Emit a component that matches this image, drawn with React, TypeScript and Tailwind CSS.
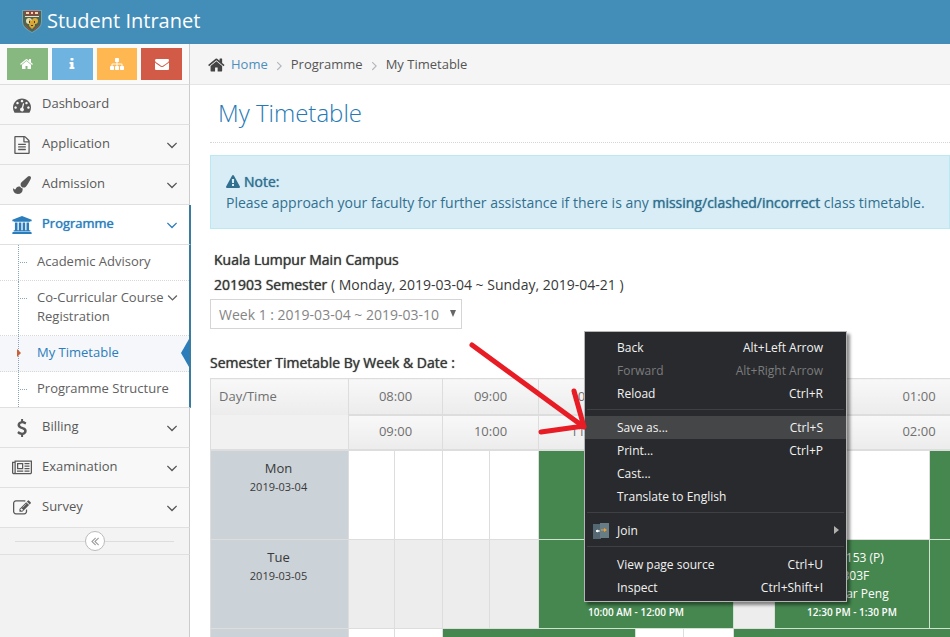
import React from 'react';

const PATHS = {
  home: 'M1408 992v480q0 26-19 45t-45 19h-384v-384h-256v384h-384q-26 0-45-19t-19-45v-480q0-1 .5-3t.5-3l575-474 575 474q1 2 1 6zm223-69l-62 74q-8 9-21 11h-3q-13 0-21-7l-692-577-692 577q-12 8-24 7-13-2-21-11l-62-74q-8-10-7-23.5t11-21.5l719-599q32-26 76-26t76 26l244 204v-195q0-14 9-23t23-9h192q14 0 23 9t9 23v408l219 182q10 8 11 21.5t-7 23.5z',
  info: 'M1216 1344v128q0 26-19 45t-45 19h-512q-26 0-45-19t-19-45v-128q0-26 19-45t45-19h64v-384h-64q-26 0-45-19t-19-45v-128q0-26 19-45t45-19h384q26 0 45 19t19 45v576h64q26 0 45 19t19 45zm-128-1152v192q0 26-19 45t-45 19h-256q-26 0-45-19t-19-45v-192q0-26 19-45t45-19h256q26 0 45 19t19 45z',
  sitemap: 'M1792 1248v320q0 40-28 68t-68 28h-320q-40 0-68-28t-28-68v-320q0-40 28-68t68-28h96v-192h-512v192h96q40 0 68 28t28 68v320q0 40-28 68t-68 28h-320q-40 0-68-28t-28-68v-320q0-40 28-68t68-28h96v-192h-512v192h96q40 0 68 28t28 68v320q0 40-28 68t-68 28h-320q-40 0-68-28t-28-68v-320q0-40 28-68t68-28h96v-192q0-52 38-90t90-38h512v-192h-96q-40 0-68-28t-28-68v-320q0-40 28-68t68-28h320q40 0 68 28t28 68v320q0 40-28 68t-68 28h-96v192h512q52 0 90 38t38 90v192h96q40 0 68 28t28 68z',
  envelope: 'M1792 710v794q0 66-47 113t-113 47h-1472q-66 0-113-47t-47-113v-794q44 49 101 87 362 246 497 345 57 42 92.5 65.5t94.5 48 110 24.5h2q51 0 110-24.5t94.5-48 92.5-65.5q170-123 498-345 57-39 100-87zm0-294q0 79-49 151t-122 123q-376 261-468 325-10 7-42.5 31t-54 38.5-52 32.5-57.5 27-50 9h-2q-23 0-50-9t-57.5-27-52-32.5-54-38.5-42.5-31q-91-64-262-182.5t-205-142.5q-62-42-117-115.5t-55-136.5q0-78 41.5-130t118.5-52h1472q65 0 112.5 47t47.5 113z',
  gauge: 'M384 1152q0-53-37.5-90.5t-90.5-37.5-90.5 37.5-37.5 90.5 37.5 90.5 90.5 37.5 90.5-37.5 37.5-90.5zm192-448q0-53-37.5-90.5t-90.5-37.5-90.5 37.5-37.5 90.5 37.5 90.5 90.5 37.5 90.5-37.5 37.5-90.5zm428 481l101-382q6-26-7.5-48.5t-38.5-29.5-48 6.5-30 39.5l-101 382q-60 5-107 43.5t-63 98.5q-20 77 20 146t117 89 146-20 89-117q16-60-6-117t-72-91zm660-33q0-53-37.5-90.5t-90.5-37.5-90.5 37.5-37.5 90.5 37.5 90.5 90.5 37.5 90.5-37.5 37.5-90.5zm-640-640q0-53-37.5-90.5t-90.5-37.5-90.5 37.5-37.5 90.5 37.5 90.5 90.5 37.5 90.5-37.5 37.5-90.5zm448 192q0-53-37.5-90.5t-90.5-37.5-90.5 37.5-37.5 90.5 37.5 90.5 90.5 37.5 90.5-37.5 37.5-90.5zm320 448q0 261-141 483-19 29-54 29h-1402q-35 0-54-29-141-221-141-483 0-182 71-348t191-286 286-191 348-71 348 71 286 191 191 286 71 348z',
  file: 'M1596 380q28 28 48 76t20 88v1152q0 40-28 68t-68 28h-1344q-40 0-68-28t-28-68v-1600q0-40 28-68t68-28h896q40 0 88 20t76 48zm-444-244v376h376q-10-29-22-41l-313-313q-12-12-41-22zm384 1528v-1024h-416q-40 0-68-28t-28-68v-416h-768v1536h1280zm-1024-864q0-14 9-23t23-9h704q14 0 23 9t9 23v64q0 14-9 23t-23 9h-704q-14 0-23-9t-9-23v-64zm736 224q14 0 23 9t9 23v64q0 14-9 23t-23 9h-704q-14 0-23-9t-9-23v-64q0-14 9-23t23-9h704zm0 256q14 0 23 9t9 23v64q0 14-9 23t-23 9h-704q-14 0-23-9t-9-23v-64q0-14 9-23t23-9h704z',
  brush: 'M1615 0q70 0 122.5 46.5t52.5 116.5q0 63-45 151-332 629-465 752-97 91-218 91-126 0-216.5-92.5t-90.5-219.5q0-128 92-212l638-579q59-54 130-54zm-909 1034q39 76 106.5 130t150.5 76l1 71q4 213-129.5 347t-348.5 134q-123 0-218-46.5t-152.5-127.5-86.5-183-29-220q7 5 41 30t62 44.5 59 36.5 46 17q41 0 55-37 25-66 57.5-112.5t69.5-76 88-47.5 103-25.5 125-10.5z',
  university: 'M960 0l960 384v128h-128q0 26-20.5 45t-48.5 19h-1526q-28 0-48.5-19t-20.5-45h-128v-128zm-704 640h256v768h128v-768h256v768h128v-768h256v768h128v-768h256v768h59q28 0 48.5 19t20.5 45v64h-1664v-64q0-26 20.5-45t48.5-19h59v-768zm1595 960q28 0 48.5 19t20.5 45v128h-1920v-128q0-26 20.5-45t48.5-19h1782z',
  dollar: 'M1362 1185q0 153-99.5 263.5t-258.5 136.5v175q0 14-9 23t-23 9h-135q-13 0-22.5-9.5t-9.5-22.5v-175q-66-9-127.5-31t-101.5-44.5-74-48-46.5-37.5-17.5-18q-17-21-2-41l103-135q7-10 23-12 15-2 24 9l2 2q113 99 243 125 37 8 74 8 81 0 142.5-43t61.5-122q0-28-15-53t-33.5-42-58.5-37.5-66-32-80-32.5q-39-16-61.5-25t-61.5-26.5-62.5-31-56.5-35.5-53.5-42.5-43.5-49-35.5-58-21-66.5-8.5-78q0-138 98-242t255-134v-180q0-13 9.5-22.5t22.5-9.5h135q14 0 23 9t9 23v176q57 6 110.5 23t87 33.5 63.5 37.5 39 29 15 14q17 18 5 38l-81 146q-8 15-23 16-14 3-27-7-3-3-14.5-12t-39-26.5-58.5-32-74.5-26-85.5-11.5q-95 0-155 43t-60 111q0 26 8.5 48t29.5 41.5 39.5 33 56 31 60.5 27 70 27.5q53 20 81 31.5t76 35 75.5 42.5 62 50 53 63.5 31.5 76.5 13 94z',
  newspaper: 'M1024 512h-384v384h384v-384zm128 640v128h-640v-128h640zm0-768v640h-640v-640h640zm640 768v128h-512v-128h512zm0-256v128h-512v-128h512zm0-256v128h-512v-128h512zm0-256v128h-512v-128h512zm-1536 960v-960h-128v960q0 26 19 45t45 19 45-19 19-45zm1664 0v-1088h-1536v1088q0 33-11 64h1483q26 0 45-19t19-45zm128-1216v1216q0 80-56 136t-136 56h-1664q-80 0-136-56t-56-136v-1088h256v-128h1792z',
  edit: 'M888 1184l116-116-152-152-116 116v56h96v96h56zm440-720q-16-16-33 1l-350 350q-17 17-1 33t33-1l350-350q17-17 1-33zm80 594v190q0 119-84.5 203.5t-203.5 84.5h-832q-119 0-203.5-84.5t-84.5-203.5v-832q0-119 84.5-203.5t203.5-84.5h832q63 0 117 25 15 7 18 23 3 17-9 29l-49 49q-14 14-32 8-23-6-45-6h-832q-66 0-113 47t-47 113v832q0 66 47 113t113 47h832q66 0 113-47t47-113v-126q0-13 9-22l64-64q15-15 35-7t20 29zm-96-738l288 288-672 672h-288v-288zm444 132l-92 92-288-288 92-92q28-28 68-28t68 28l152 152q28 28 28 68t-28 68z',
  warning: 'M1024 1375v-190q0-14-9.5-23.5t-22.5-9.5h-192q-13 0-22.5 9.5t-9.5 23.5v190q0 14 9.5 23.5t22.5 9.5h192q13 0 22.5-9.5t9.5-23.5zm-2-374l18-459q0-12-10-19-13-11-24-11h-220q-11 0-24 11-10 7-10 21l17 457q0 10 10 16.5t24 6.5h185q14 0 23.5-6.5t10.5-16.5zm-14-934l768 1408q35 63-2 126-17 29-46.5 46t-63.5 17h-1536q-34 0-63.5-17t-46.5-46q-37-63-2-126l768-1408q17-31 47-49t65-18 65 18 47 49z',
  angleDown: 'M1395 736q0 13-10 23l-466 466q-10 10-23 10t-23-10l-466-466q-10-10-10-23t10-23l50-50q10-10 23-10t23 10l393 393 393-393q10-10 23-10t23 10l50 50q10 10 10 23z',
  angleRight: 'M1171 960q0 13-10 23l-466 466q-10 10-23 10t-23-10l-50-50q-10-10-10-23t10-23l393-393-393-393q-10-10-10-23t10-23l50-50q10-10 23-10t23 10l466 466q10 10 10 23z',
  anglesLeft: 'M1011 1376q0 13-10 23l-50 50q-10 10-23 10t-23-10l-466-466q-10-10-10-23t10-23l466-466q10-10 23-10t23 10l50 50q10 10 10 23t-10 23l-393 393 393 393q10 10 10 23zm384 0q0 13-10 23l-50 50q-10 10-23 10t-23-10l-466-466q-10-10-10-23t10-23l466-466q10-10 23-10t23 10l50 50q10 10 10 23t-10 23l-393 393 393 393q10 10 10 23z',
};

type IconName = keyof typeof PATHS;

// Emphasis that thickens the regular weight and keeps its widths.
const STRONG = 'font-normal [text-shadow:0_0_1px_currentColor]';

function Icon({ name, className = '', wide = 1792 }: { name: IconName; className?: string; wide?: number }) {
  return (
    <svg viewBox={`0 0 ${wide} 1792`} fill="currentColor" aria-hidden="true" className={`shrink-0 ${className}`}>
      <path d={PATHS[name]} />
    </svg>
  );
}

function Crest() {
  return (
    <svg viewBox="0 0 20 24" className="h-6 w-5 shrink-0" aria-hidden="true">
      <path d="M0 1h20v12q0 6-10 11Q0 19 0 13z" fill="#6fa3b5" />
      <path d="M1 2h18v11q0 5-9 10-9-5-9-10z" fill="#4c6450" />
      <path d="M3 2h14v4H3z" fill="#a63a30" />
      <path d="M4 3h3v2H4zM9 3h2v2H9zM13 3h3v2h-3z" fill="#e9d9b0" />
      <path d="M3 7h14v1H3z" fill="#e8e2c8" />
      <circle cx="7" cy="12" r="3" fill="#e6dfb4" />
      <circle cx="13" cy="12" r="3" fill="#dcae3c" />
      <path d="M7 10l3 2 3-2v7l-3 3-3-3z" fill="#d9a634" />
      <path d="M7 12h1v2H7zM12 12h1v2h-1zM9 16h2v1H9z" fill="#4a3b1c" />
      <path d="M3 16l5 5M17 16l-5 5" stroke="#b0483a" strokeWidth="1" />
    </svg>
  );
}

const SHORTCUTS: { name: IconName; label: string; tone: string }[] = [
  { name: 'home', label: 'Home', tone: 'bg-[#87b87f]' },
  { name: 'info', label: 'Information', tone: 'bg-[#6fb3e0]' },
  { name: 'sitemap', label: 'Site map', tone: 'bg-[#ffb752]' },
  { name: 'envelope', label: 'Mail', tone: 'bg-[#d15b47]' },
];

function NavItem({ icon, label, wide, active, arrow = true }: { icon: IconName; label: string; wide?: number; active?: boolean; arrow?: boolean }) {
  const tone = active
    ? `border-r-2 border-r-[#3a7c9f] bg-white text-[#2b7dbc] ${STRONG}`
    : 'border-r border-r-[#ccc] bg-[#f8f8f8] text-[#585858]';
  return (
    <a href="#" className={`flex h-10 items-center border-b border-b-[#e0e0e0] pr-2 pl-3 text-[13px] ${tone}`}>
      <span className="flex w-[20px] justify-center">
        <Icon name={icon} wide={wide} className="h-[18px] w-[20px]" />
      </span>
      <span className="flex-1 pb-px pl-[10px]">{label}</span>
      {arrow && <Icon name="angleDown" className={`h-[18px] w-[18px] ${active ? 'text-[#2b7dbc]' : 'text-[#555]'}`} />}
    </a>
  );
}

function SubItem({ label, active, arrow, last }: { label: string; active?: boolean; arrow?: boolean; last?: boolean }) {
  return (
    <li className={`relative ${last ? '' : 'border-b border-dotted border-[#d8d8d8]'} ${active ? 'bg-[#f5f7fa]' : 'bg-white'}`}>
      <span className="absolute top-0 bottom-0 left-[18px] border-l border-dotted border-[#8aa5b8]" />
      {active ? (
        <>
          <span className="absolute top-[13px] left-[17px] border-y-[4px] border-l-[4px] border-y-transparent border-l-[#c86139]" />
          <span className="absolute top-[3px] right-0 border-y-[14px] border-r-[8px] border-y-transparent border-r-[#2b7dbc]" />
        </>
      ) : (
        <span className="absolute top-[17px] left-[20px] w-[7px] border-t border-dotted border-[#8aa5b8]" />
      )}
      <a href="#" className={`flex items-start pt-[7px] pr-[8px] pb-[9px] pl-[37px] text-[13px] leading-[19px] ${active ? 'text-[#2b7dbc]' : 'text-[#616161]'}`}>
        <span className="flex-1">{label}</span>
        {arrow && <Icon name="angleDown" className="mt-px h-[17px] w-[17px]" />}
      </a>
    </li>
  );
}

function Sidebar() {
  return (
    <aside className="w-[191px] shrink-0">
      <div className="flex h-full flex-col">
        <div className="mr-px flex h-[41px] items-center gap-[4px] border-r border-b border-r-[#ccc] border-b-[#ddd] bg-[#fafafa] px-[7px]">
          {SHORTCUTS.map((s) => (
            <button key={s.name} type="button" aria-label={s.label} className={`flex h-8 flex-1 items-center justify-center text-white ${s.tone}`}>
              <Icon name={s.name} className="h-[14px] w-[14px]" />
            </button>
          ))}
        </div>
        <nav className="text-[13px]">
          <div className="mr-px">
            <NavItem icon="gauge" label="Dashboard" arrow={false} />
            <NavItem icon="file" label="Application" />
            <NavItem icon="brush" label="Admission" />
          </div>
          <NavItem icon="university" label="Programme" wide={1920} active />
          <ul className="border-r-2 border-b border-r-[#3a7c9f] border-b-[#e0e0e0]">
            <SubItem label="Academic Advisory" />
            <SubItem label="Co-Curricular Course Registration" arrow />
            <SubItem label="My Timetable" active />
            <SubItem label="Programme Structure" last />
          </ul>
          <div className="mr-px">
            <NavItem icon="dollar" label="Billing" />
            <NavItem icon="newspaper" label="Examination" wide={2048} />
            <NavItem icon="edit" label="Survey" />
          </div>
        </nav>
        <div className="mr-px flex h-[27px] items-center border-r border-b border-r-[#ccc] border-b-[#e0e0e0] bg-[#f3f3f3] px-[15px]">
          <span className="h-px flex-1 bg-[#ddd]" />
          <button type="button" aria-label="Collapse menu" className="flex h-5 w-5 items-center justify-center rounded-full border border-[#bbb] bg-white text-[#999]">
            <Icon name="anglesLeft" className="h-[14px] w-[14px]" />
          </button>
          <span className="h-px flex-1 bg-[#ddd]" />
        </div>
        <div className="mr-px flex-1 border-r border-[#ccc] bg-[#f2f2f2]" />
      </div>
    </aside>
  );
}

const COLS = ['w-[138px]', 'w-[46px]', 'w-[48px]', 'w-[47px]', 'w-[49px]', 'w-[48px]', 'w-[49px]', 'w-[48px]', 'w-[50px]', 'w-[41px]', 'w-[71px]', 'w-[84px]', 'w-[63px]'];
const STARTS = ['08:00', '09:00', '10:00', '11:00', '12:00', '01:00'];
const ENDS = ['09:00', '10:00', '11:00', '12:00', '01:00', '02:00'];

function HourCells({ hours }: { hours: string[] }) {
  return (
    <>
      {hours.map((h) => (
        <th key={h} colSpan={2} className="border border-b-2 border-[#ddd] bg-linear-to-b from-[#f8f8f8] to-[#ececec] font-normal">
          {h}
        </th>
      ))}
    </>
  );
}

function Free({ count }: { count: number }) {
  return (
    <>
      {Array.from({ length: count }, (_, i) => (
        <td key={i} className="border border-[#ddd]" />
      ))}
    </>
  );
}

function Lesson({ span, lines = [], time }: { span: number; lines?: string[]; time?: string }) {
  return (
    <td colSpan={span} className="border border-[#cfe3d1] bg-[#46874f] pt-[9px] text-center align-top text-[12px] leading-[18px] text-white">
      {lines.map((l, i) => (
        <div key={i} className="h-[18px]">{l}</div>
      ))}
      {time && <div className="text-[10px] font-semibold">{time}</div>}
    </td>
  );
}

function Day({ name, date }: { name: string; date: string }) {
  return (
    <th scope="row" className="border border-[#ddd] bg-[#cbd2d8] pt-[8px] pr-[2px] text-center align-top font-normal text-[#393939]">
      <div className="text-[13px] leading-[18px]">{name}</div>
      <div className="text-[11px] leading-[19px]">{date}</div>
    </th>
  );
}

function Timetable() {
  return (
    <table className="w-[782px] table-fixed border-collapse text-[13px] text-[#707070]">
      <colgroup>
        {COLS.map((c, i) => (
          <col key={i} className={c} />
        ))}
      </colgroup>
      <thead>
        <tr className="h-9">
          <th className="border border-b-0 border-[#ddd] bg-linear-to-b from-[#f8f8f8] to-[#ececec] px-2 text-left font-normal">Day/Time</th>
          <HourCells hours={STARTS} />
        </tr>
        <tr className="h-[35px]">
          <td className="border border-t-0 border-b-2 border-[#ddd] bg-[#f1f1f1]" />
          <HourCells hours={ENDS} />
        </tr>
      </thead>
      <tbody>
        <tr className="h-[90px]">
          <Day name="Mon" date="2019-03-04" />
          <Free count={4} />
          <Lesson span={4} />
          <Free count={3} />
          <Lesson span={1} />
        </tr>
        <tr className="h-[89px] bg-[#ededed]">
          <Day name="Tue" date="2019-03-05" />
          <Free count={4} />
          <Lesson span={4} lines={['', '', '']} time="10:00 AM - 12:00 PM" />
          <Free count={1} />
          <Lesson span={2} lines={['BAI1153 (P)', 'B303F', 'Lim Kar Peng']} time="12:30 PM - 1:30 PM" />
          <Lesson span={1} />
        </tr>
        <tr className="h-[89px]">
          <Day name="Wed" date="2019-03-06" />
          <Free count={2} />
          <Lesson span={4} />
          <Free count={2} />
          <Lesson span={4} />
        </tr>
      </tbody>
    </table>
  );
}

function MenuItem({ label, keys, dim, hot, children }: { label: string; keys?: string; dim?: boolean; hot?: boolean; children?: React.ReactNode }) {
  return (
    <button
      type="button"
      role="menuitem"
      disabled={dim}
      className={`flex h-[23px] w-full items-center pr-[23px] text-left ${hot ? 'bg-[#454647]' : ''} ${dim ? 'text-[#7b7c7e]' : 'text-[#f2f2f2]'}`}
    >
      <span className="flex w-8 shrink-0 justify-center">{children}</span>
      <span className="flex-1">{label}</span>
      {keys && <span>{keys}</span>}
    </button>
  );
}

function Separator() {
  return <div role="separator" className="mx-[2px] mt-[4px] mb-[6px] h-px bg-[#3f4043]" />;
}

function ContextMenu() {
  return (
    <div role="menu" className="absolute top-[331px] left-[584px] w-[263px] border border-[#b5b5b5] bg-[#292a2d] pt-1 pb-[2px] text-[12px] leading-[16px] shadow-[3px_3px_3px_rgba(0,0,0,0.45)]">
      <MenuItem label="Back" keys="Alt+Left Arrow" />
      <MenuItem label="Forward" keys="Alt+Right Arrow" dim />
      <MenuItem label="Reload" keys="Ctrl+R" />
      <Separator />
      <MenuItem label="Save as..." keys="Ctrl+S" hot />
      <MenuItem label="Print..." keys="Ctrl+P" />
      <MenuItem label="Cast..." />
      <MenuItem label="Translate to English" />
      <Separator />
      <div className="relative">
        <MenuItem label="Join">
          <svg viewBox="0 0 16 16" className="h-4 w-4" aria-hidden="true">
            <path d="M0 1h8v15H0z" fill="#546874" />
            <path d="M7 0h9v15H7z" fill="#687c86" />
            <path d="M3 8h4M3 8l2-1v2z" stroke="#fff" strokeWidth="1" fill="#fff" />
            <path d="M8 7h4" stroke="#f0a030" strokeWidth="1" />
            <path d="M11 5l3 2-3 2z" fill="#f0a030" />
          </svg>
        </MenuItem>
        <span className="absolute top-[7px] right-[7px] border-y-[4px] border-l-[5px] border-y-transparent border-l-[#b0b0b0]" />
      </div>
      <Separator />
      <MenuItem label="View page source" keys="Ctrl+U" />
      <MenuItem label="Inspect" keys="Ctrl+Shift+I" />
    </div>
  );
}

export default function App() {
  return (
    <div className="relative flex h-screen flex-col overflow-hidden bg-white font-['Open_Sans','Noto_Sans',sans-serif] text-[13px] text-[#393939]">
      <header className="flex h-11 shrink-0 items-center gap-[5px] bg-[#438eb9] pb-[2px] pl-[22px] text-white">
        <Crest />
        <span className="text-[20px] leading-[28px]">Student Intranet</span>
      </header>
      <div className="flex min-h-0 flex-1">
        <Sidebar />
        <main className="min-w-0 flex-1">
          <nav aria-label="Breadcrumb" className="-ml-px flex h-[41px] items-center border-b border-[#e5e5e5] bg-[#f5f5f5] pt-[2px] pl-[18px] text-[13px] text-[#555]">
            <Icon name="home" className="h-[20px] w-[18px] text-[#444]" />
            <a href="#" className="pl-[5px] text-[#4c8fbd]">Home</a>
            <Icon name="angleRight" className="mx-[4px] h-[15px] w-[15px] text-[#b2b6bf]" />
            <span>Programme</span>
            <Icon name="angleRight" className="mx-[4px] h-[15px] w-[15px] text-[#b2b6bf]" />
            <span>My Timetable</span>
          </nav>
          <div className="pl-[19px]">
            <h1 className="border-b border-dotted border-[#d5d5d5] pt-[12px] pb-[13px] pl-2 text-[24px] leading-[32px] font-light text-[#2679b5]">My Timetable</h1>
            <div className="mt-[12px] border border-[#bce8f1] bg-[#d9edf7] px-[15px] py-[15px] text-[14px] leading-[21px] whitespace-nowrap text-[#31708f]">
              <div className={`flex items-center gap-[4px] ${STRONG}`}>
                <Icon name="warning" className="h-[14px] w-[14px]" />
                Note:
              </div>
              <p>
                Please approach your faculty for further assistance if there is any <strong className={STRONG}>missing/clashed/incorrect</strong> class timetable.
              </p>
            </div>
            <div className="mt-[18px] pl-1 text-[14px] leading-[25px]">
              <p className={STRONG}>Kuala Lumpur Main Campus</p>
              <p>
                <strong className={STRONG}>201903 Semester</strong> ( Monday, 2019-03-04 ~ Sunday, 2019-04-21 )
              </p>
            </div>
            <div className="relative mt-[2px] w-[252px]">
              <select aria-label="Week" className="h-[30px] w-full appearance-none border border-[#d5d5d5] bg-white px-2 text-[14px] text-[#858585]">
                <option>Week 1 : 2019-03-04 ~ 2019-03-10</option>
              </select>
              <span className="pointer-events-none absolute top-[11px] right-[6px] border-x-[3px] border-t-[7px] border-x-transparent border-t-[#666]" />
            </div>
            <h2 className={`mt-[23px] mb-[4px] text-[14px] leading-[22px] ${STRONG}`}>Semester Timetable By Week &amp; Date :</h2>
            <Timetable />
          </div>
        </main>
      </div>
      <ContextMenu />
      <svg viewBox="0 0 130 110" className="pointer-events-none absolute top-[335px] left-[464px] h-[110px] w-[130px]" aria-hidden="true">
        <path d="M8 10L120 92M110 56L120 92M77 97L120 91" fill="none" stroke="#e81c24" strokeWidth="5" strokeLinecap="round" />
      </svg>
    </div>
  );
}
